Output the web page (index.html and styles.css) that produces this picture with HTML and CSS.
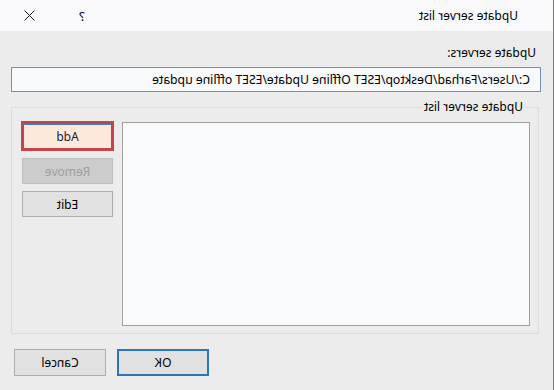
FILE: index.html
```html
<!doctype html>
<html lang="en">
<head>
    <meta charset="utf-8">
    <title>Update server list</title>
    <link rel="stylesheet" href="styles.css">
</head>
<body>

<!-- Окно целиком отражено по горизонтали, как на снимке -->
<div class="window">
    <div class="titlebar">
        <span class="title-text">Update server list</span>
        <span class="title-help">?</span>
        <span class="title-close">
            <svg width="11" height="11" viewBox="0 0 11 11"><path d="M0.5 0.5 L10.5 10.5 M10.5 0.5 L0.5 10.5" stroke="#1a1a1a" stroke-width="1" fill="none"/></svg>
        </span>
    </div>

    <div class="content">
        <label class="field-label" for="servers">Update servers:</label>
        <div class="field-row">
            <input class="field-input" id="servers" type="text" value="C:/Users/Farhad/Desktop/ESET Offline Update/ESET offline update">
        </div>

        <fieldset class="group">
            <legend class="group-title">Update server list</legend>
            <div class="group-body">
                <div class="listbox"></div>
                <div class="side-buttons">
                    <button class="btn btn-default" type="button">Add</button>
                    <button class="btn" type="button" disabled>Remove</button>
                    <button class="btn" type="button">Edit</button>
                </div>
            </div>
        </fieldset>

        <div class="footer">
            <button class="btn btn-ok" type="button">OK</button>
            <button class="btn" type="button">Cancel</button>
        </div>
    </div>
</div>

</body>
</html>
```

FILE: styles.css
```css
*, *::before, *::after {
    box-sizing: border-box;
}

body {
    margin: 0;
    background: #ececec;
    font-family: "Noto Sans", "Open Sans", Arial, sans-serif;
    font-size: 12px;
    color: #000;
}

/* Окно диалога (зеркально) */
.window {
    width: 554px;
    height: 390px;
    background: #ececec;
    border-left: 1px solid #7a7a7a;
    transform: scaleX(-1);
    overflow: hidden;
}

/* Заголовок окна */
.titlebar {
    height: 31px;
    background: #f9f9fb;
    display: flex;
    align-items: center;
    padding-left: 35px;
}

.title-text {
    font-size: 12px;
    flex: 1;
}

.title-help {
    width: 20px;
    text-align: center;
    font-size: 13px;
    margin-right: 32px;
}

.title-close {
    width: 20px;
    display: flex;
    justify-content: center;
    margin-right: 20px;
}

/* Основная область */
.content {
    display: flex;
    flex-direction: column;
    padding: 0 11px 0 14px;
}

.field-label {
    margin-top: 14px;
    margin-left: 3px;
    line-height: 16px;
    height: 16px;
}

.field-row {
    display: flex;
    margin-top: 6px;
    margin-left: -2px;
}

.field-input {
    width: 530px;
    height: 25px;
    border: 1px solid #7390b6;
    background: #f8f9fb;
    font: inherit;
    font-size: 12.2px;
    padding: 0 10px;
    outline: none;
}

/* Групповой блок */
.group {
    margin: 8px 0 0 0;
    padding: 0 8px 7px 8px;
    height: 234px;
    border: 1px solid #dcdcdc;
    border-radius: 0;
}

.group-title {
    padding: 0 1px;
    margin-left: 6px;
    line-height: 14px;
}

.group-body {
    display: flex;
    gap: 9px;
    margin-top: 8px;
}

.listbox {
    width: 408px;
    height: 204px;
    background: #f9fafc;
    border: 1px solid #a0a0a0;
}

.side-buttons {
    width: 91px;
    display: flex;
    flex-direction: column;
    gap: 7px;
    margin-top: -1px;
}

/* Кнопки */
.btn {
    font: inherit;
    height: 26px;
    background: #e1e1e1;
    border: 1px solid #adadad;
    color: #000;
    padding: 0;
}

.btn:disabled {
    background: #cccccc;
    border-color: #bfbfbf;
    color: #a0a0a0;
}

.btn-default {
    height: 30px;
    margin: 0 -1px 0 -1px;
    background: #fde9dc;
    border: 3px solid #c3444c;
    box-shadow: inset 0 1px 0 #4a7fc0;
    color: #1a1a3a;
}

.footer {
    display: flex;
    justify-content: flex-end;
    gap: 11px;
    margin-top: 15px;
    margin-right: 3px;
}

.footer .btn {
    width: 92px;
    height: 27px;
}

.btn-ok {
    border: 2px solid #2e74b8;
}
```
